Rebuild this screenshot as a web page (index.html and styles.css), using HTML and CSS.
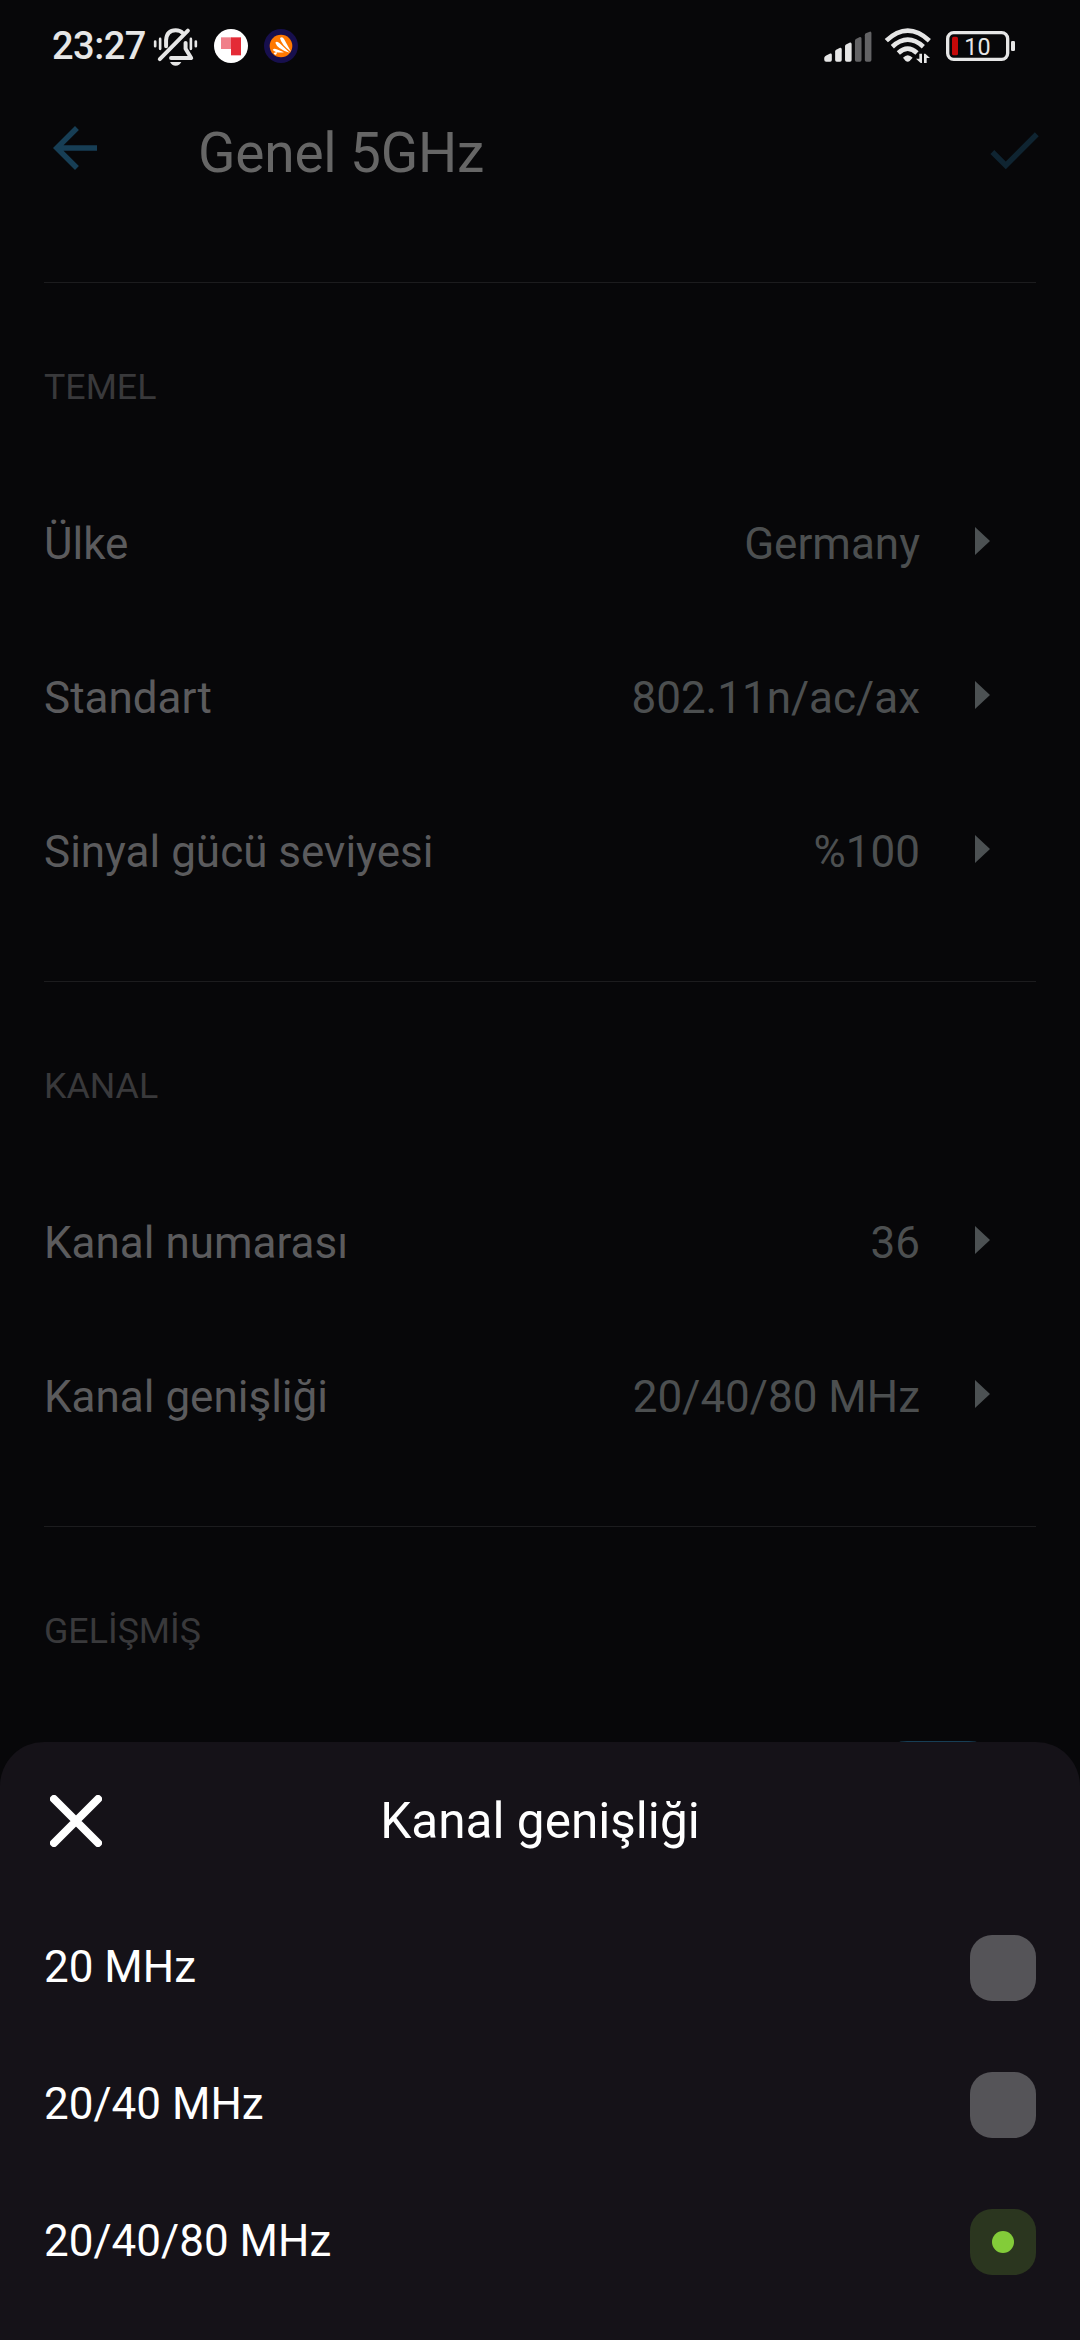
FILE: index.html
```html
<!DOCTYPE html>
<html lang="tr">
<head>
    <meta charset="UTF-8">
    <meta name="viewport" content="width=device-width, initial-scale=1.0">
    <title>Genel 5GHz</title>
    <link rel="stylesheet" href="styles.css">
</head>
<body>
    <div class="screen">
        <div class="status-bar">
            <span class="clock">23:27</span>
            <svg class="bell" viewBox="370 50 135 118">
                <g fill="none" stroke="#e6e6e6" stroke-width="12" stroke-linecap="round" stroke-linejoin="round">
                    <path d="M409 108 V90 Q411 60 438 60 Q452 60 460 69"/>
                    <path d="M468 98 V116 L485 144 H424"/>
                    <path d="M390 147 L475 61"/>
                </g>
                <path d="M421 156 H455 Q450 167 438 167 Q426 167 421 156Z" fill="#e6e6e6"/>
                <g stroke="#e6e6e6" stroke-width="8" stroke-linecap="round">
                    <path d="M376 94V108M391 86V116M484 86V116M499 94V108"/>
                </g>
            </svg>
            <svg class="app-icon" viewBox="0 0 102 102">
                <circle cx="51" cy="51" r="51" fill="#fff"/>
                <rect x="21" y="25" width="31" height="35" fill="#f0808a"/>
                <path d="M51 25H81V79H51Z" fill="#e42b36"/>
            </svg>
            <svg class="app-icon" viewBox="0 0 102 102">
                <circle cx="51" cy="51" r="51" fill="#170f4d"/>
                <circle cx="51" cy="51" r="34" fill="#ff7800"/>
                <g fill="#fff">
                    <path d="M48 27Q55 21 60 30L81 68Q52 48 48 27Z"/>
                    <path d="M34 41Q39 35 47 43L77 71Q40 60 34 41Z"/>
                    <path d="M26 63Q30 57 38 61L60 70Q36 73 26 63Z"/>
                    <path d="M29 73Q34 68 40 70L36 77Q31 78 29 73Z"/>
                </g>
            </svg>
            <svg class="signal" viewBox="72 60 144 100">
                <g fill="#e6e6e6">
                    <path d="M72 150V144Q73 139 78 137L90 131Q95 130 95 135V151Q95 156 90 156H78Q72 156 72 150Z"/>
                    <path d="M105 151V125Q105 122 108 120L120 114Q125 113 125 119V151Q125 156 120 156H110Q105 156 105 151Z"/>
                    <path d="M135 151V109Q135 106 138 104L150 98Q155 97 155 103V151Q155 156 150 156H140Q135 156 135 151Z"/>
                </g>
                <g fill="#636365">
                    <path d="M165 151V93Q165 89 168 87L180 81Q185 80 185 86V151Q185 156 180 156H170Q165 156 165 151Z"/>
                    <path d="M195 151V76Q195 72 198 70L210 65Q215 64 215 70V151Q215 156 210 156H200Q195 156 195 151Z"/>
                </g>
            </svg>
            <svg class="wifi" viewBox="252 54 144 114">
                <g fill="none" stroke="#e6e6e6" stroke-width="14">
                    <path d="M259 95Q323 35 388 95"/>
                    <path d="M277 113Q323 71 370 113"/>
                    <path d="M295 132Q323 106 351 132"/>
                </g>
                <path d="M309 146Q323 131 338 146L329 156Q323 161 317 156Z" fill="#e6e6e6"/>
                <path d="M358 134H366V162H362L348 149H358Z" fill="#e6e6e6"/>
                <path d="M372 134H376L390 147H380V162H372Z" fill="#e6e6e6"/>
            </svg>
            <svg class="battery" viewBox="438 60 207 96">
                <rect x="443" y="68" width="180" height="80" rx="18" fill="none" stroke="#e6e6e6" stroke-width="10"/>
                <rect x="456" y="80" width="18" height="56" rx="5" fill="#c40808"/>
                <rect x="633" y="93" width="12" height="30" rx="4" fill="#e6e6e6"/>
                <text x="493" y="135" class="battery-text">10</text>
            </svg>
        </div>

        <div class="toolbar">
            <svg class="back" viewBox="0 0 24 24"><path d="M20 11H7.83l5.59-5.59L12 4l-8 8 8 8 1.41-1.41L7.83 13H20v-2z"/></svg>
            <h1>Genel 5GHz</h1>
            <svg class="done" viewBox="0 0 24 24"><path d="M9 16.17L4.83 12l-1.42 1.41L9 19 21 7l-1.41-1.41z"/></svg>
        </div>

        <div class="section">
            <h2>TEMEL</h2>
            <div class="row"><span class="label">Ülke</span><span class="value">Germany</span><i class="arrow"></i></div>
            <div class="row"><span class="label">Standart</span><span class="value">802.11n/ac/ax</span><i class="arrow"></i></div>
            <div class="row"><span class="label">Sinyal gücü seviyesi</span><span class="value">%100</span><i class="arrow"></i></div>
        </div>
        <div class="section">
            <h2>KANAL</h2>
            <div class="row"><span class="label">Kanal numarası</span><span class="value">36</span><i class="arrow"></i></div>
            <div class="row"><span class="label">Kanal genişliği</span><span class="value">20/40/80 MHz</span><i class="arrow"></i></div>
        </div>
        <div class="section">
            <h2>GELİŞMİŞ</h2>
            <div class="row switch-row"><i class="switch"></i></div>
        </div>

        <div class="sheet">
            <div class="sheet-header">
                <svg class="close" viewBox="0 0 52 52"><path d="M4 4L48 48M48 4L4 48"/></svg>
                <span class="sheet-title">Kanal genişliği</span>
            </div>
            <div class="option"><span>20 MHz</span><i class="radio"></i></div>
            <div class="option"><span>20/40 MHz</span><i class="radio"></i></div>
            <div class="option"><span>20/40/80 MHz</span><i class="radio checked"></i></div>
        </div>
    </div>
</body>
</html>
```

FILE: styles.css
```css
* {
    box-sizing: border-box;
}

body {
    margin: 0;
    background-color: #070709;
    font-family: Roboto, sans-serif;
}

.screen {
    position: relative;
    width: 1080px;
    height: 2340px;
    overflow: hidden;
    background-color: #070709;
}

svg {
    display: block;
    flex-shrink: 0;
}

/* status bar */
.status-bar {
    display: flex;
    align-items: center;
    height: 92px;
    padding: 0 65px 0 52px;
}

.clock {
    width: 101px;
    font-size: 38px;
    font-weight: 500;
    line-height: 44px;
    letter-spacing: -0.5px;
    color: #e6e6e6;
}

.bell {
    width: 45px;
    height: 39px;
    margin-right: 16px;
}

.app-icon {
    width: 34px;
    height: 34px;
    margin-right: 16px;
}

.signal {
    width: 48px;
    height: 33px;
    margin-left: auto;
    margin-right: 12px;
}

.wifi {
    width: 48px;
    height: 38px;
    margin-right: 14px;
}

.battery {
    width: 69px;
    height: 32px;
}

.battery-text {
    font-size: 70px;
    fill: #e6e6e6;
}

/* toolbar */
.toolbar {
    display: flex;
    height: 190px;
    padding: 23px 33px 0 42px;
}

.back {
    width: 66px;
    height: 66px;
    fill: #173e55;
}

.done {
    width: 66px;
    height: 66px;
    margin-top: 2px;
    fill: #0f2431;
}

h1 {
    flex: 1;
    margin: 6px 0 0 90px;
    font-size: 55px;
    font-weight: 400;
    line-height: 64px;
    letter-spacing: -0.2px;
    color: #666;
}

/* settings */
.section {
    margin: 0 44px 52px;
    padding-top: 82px;
    border-top: 1px solid #1c1c1e;
}

h2 {
    margin: 0 0 58px;
    font-size: 35.75px;
    font-weight: 400;
    line-height: 44px;
    color: #39393b;
}

.row {
    display: flex;
    align-items: center;
    height: 154px;
    padding-right: 46px;
    font-size: 44px;
}

.label {
    flex: 1;
    color: #5b5b5d;
}

.value {
    color: #4c4f50;
}

.arrow {
    margin: 0 0 6px 55px;
    border-left: 15px solid #4c5153;
    border-top: 14px solid transparent;
    border-bottom: 14px solid transparent;
}

.switch-row {
    align-items: flex-start;
    justify-content: flex-end;
    padding: 30px 35px 0 0;
}

.switch {
    width: 126px;
    height: 64px;
    border-radius: 32px;
    background-color: #173e55;
}

/* bottom sheet */
.sheet {
    position: absolute;
    left: 0;
    right: 0;
    bottom: 0;
    height: 598px;
    padding: 0 44px;
    border-radius: 44px 44px 0 0;
    background-color: #151218;
    color: #fff;
}

.sheet-header {
    display: grid;
    grid-template-columns: 58px 1fr 58px;
    align-items: center;
    height: 157px;
}

.close {
    width: 52px;
    height: 52px;
    margin-left: 6px;
    fill: none;
    stroke: #fff;
    stroke-width: 8;
    stroke-linecap: round;
}

.sheet-title {
    font-size: 49.5px;
    text-align: center;
}

.option {
    display: flex;
    justify-content: space-between;
    align-items: center;
    height: 137px;
    font-size: 44px;
}

.option span {
    padding-bottom: 2px;
}

.radio {
    display: flex;
    align-items: center;
    justify-content: center;
    width: 66px;
    height: 66px;
    border-radius: 22px;
    background-color: #555458;
}

.radio.checked {
    background-color: #2b361f;
}

.radio.checked::after {
    content: "";
    width: 22px;
    height: 22px;
    border-radius: 50%;
    background-color: #83cc39;
}
```
